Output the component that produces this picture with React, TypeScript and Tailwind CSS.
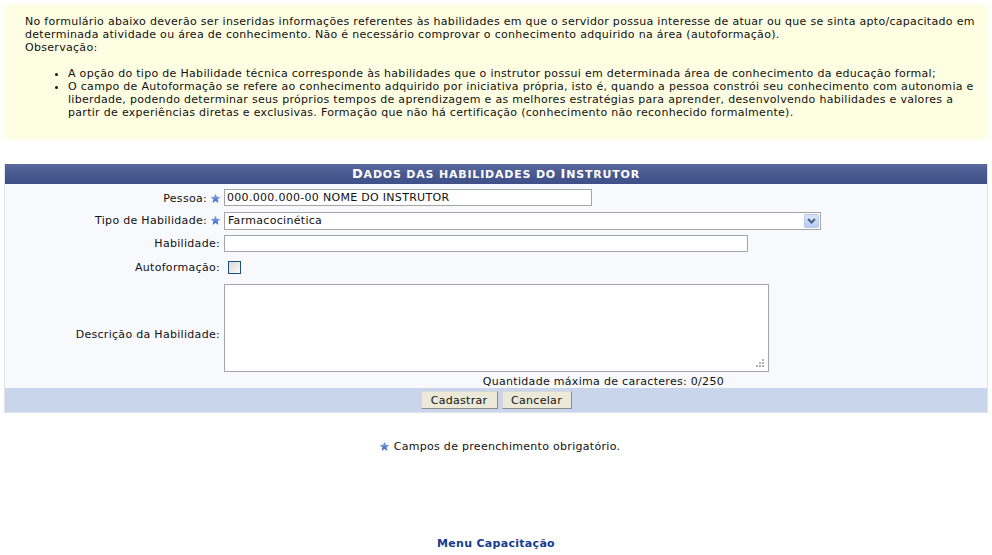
import React from "react";

function Star() {
  return (
    <svg width="9" height="9" viewBox="0 0 10 10" className="inline-block">
      <defs>
        <linearGradient id="sg" x1="0" y1="0" x2="0" y2="1">
          <stop offset="0" stopColor="#8fb3f0" />
          <stop offset="1" stopColor="#2f5fc4" />
        </linearGradient>
      </defs>
      <polygon
        points="5,0.3 6.3,3.5 9.7,3.7 7.1,5.9 7.9,9.4 5,7.5 2.1,9.4 2.9,5.9 0.3,3.7 3.7,3.5"
        fill="url(#sg)"
        stroke="#3a66c0"
        strokeWidth="0.4"
      />
    </svg>
  );
}

export default function App() {
  const font = { fontFamily: '"DejaVu Sans", Verdana, sans-serif' };
  return (
    <div className="min-h-[555px] bg-white text-[11px] leading-[13px] tracking-[0.3px] text-[#111]" style={font}>
      <div className="mx-[4px] pt-[4px]">
        <div className="bg-[#fefee2] pl-[21px] pr-[8px] pt-[11px] pb-[8px]">
          <p>
            No formulário abaixo deverão ser inseridas informações referentes às habilidades em que o servidor possua
            interesse de atuar ou que se sinta apto/capacitado em determinada atividade ou área de conhecimento. Não é
            necessário comprovar o conhecimento adquirido na área (autoformação).
          </p>
          <p>Observação:</p>
          <ul className="my-[13px] list-disc pl-[43px]">
            <li>
              A opção do tipo de Habilidade técnica corresponde às habilidades que o instrutor possui em determinada área
              de conhecimento da educação formal;
            </li>
            <li>
              O campo de Autoformação se refere ao conhecimento adquirido por iniciativa própria, isto é, quando a pessoa
              constrói seu conhecimento com autonomia e liberdade, podendo determinar seus próprios tempos de
              aprendizagem e as melhores estratégias para aprender, desenvolvendo habilidades e valores a partir de
              experiências diretas e exclusivas. Formação que não há certificação (conhecimento não reconhecido
              formalmente).
            </li>
          </ul>
        </div>

        <div className="mt-[24px] border border-t-0 border-[#dfe3ea]">
          <div className="flex h-[20px] items-center justify-center bg-gradient-to-b from-[#5b6a9e] via-[#485990] to-[#3f4f87] text-[11px] font-bold uppercase tracking-[0.8px] text-white">
            <span>
              <span className="text-[13px]">D</span>ados das habilidades do <span className="text-[13px]">I</span>nstrutor
            </span>
          </div>
          <div className="bg-[#f8f9fc] pt-[2px]">
            <div className="grid grid-cols-[215px_1fr] gap-x-[4px]">
              <div className="flex h-[23px] items-center justify-end gap-[4px] pt-[1px]">
                <span>Pessoa:</span>
                <Star />
              </div>
              <div className="flex h-[23px] items-center">
                <div className="flex h-[17px] w-[368px] items-center border border-[#a5a5a5] bg-white px-[2px] text-[11px]">
                  000.000.000-00 NOME DO INSTRUTOR
                </div>
              </div>

              <div className="flex h-[23px] items-center justify-end gap-[4px]">
                <span>Tipo de Habilidade:</span>
                <Star />
              </div>
              <div className="flex h-[23px] items-center">
                <div className="flex h-[18px] w-[597px] items-center justify-between border border-[#a5a5a5] bg-white pl-[3px] pr-[1px]">
                  <span>Farmacocinética</span>
                  <span className="flex h-[14px] w-[15px] items-center justify-center rounded-[2px] bg-gradient-to-b from-[#d9e5fb] to-[#b9cdf3] border border-[#b4c7ee]">
                    <svg width="9" height="6" viewBox="0 0 9 6">
                      <path d="M1 1 L4.5 4.5 L8 1" fill="none" stroke="#4d6185" strokeWidth="2" />
                    </svg>
                  </span>
                </div>
              </div>

              <div className="flex h-[23px] items-center justify-end">
                <span>Habilidade:</span>
              </div>
              <div className="flex h-[23px] items-center">
                <div className="h-[17px] w-[524px] border border-[#a5a5a5] bg-white" />
              </div>

              <div className="flex h-[25px] items-center justify-end">
                <span>Autoformação:</span>
              </div>
              <div className="flex h-[25px] items-center pl-[4px]">
                <div className="h-[13px] w-[13px] border border-[#1c4f7c] bg-gradient-to-br from-[#dcdcd6] to-[#f8f8f6]" />
              </div>

              <div className="flex items-center justify-end">
                <span>Descrição da Habilidade:</span>
              </div>
              <div className="pt-[4px]">
                <div className="relative h-[88px] w-[545px] border border-[#a5a5a5] bg-white">
                  <svg className="absolute bottom-[3px] right-[3px]" width="10" height="10" viewBox="0 0 10 10">
                    <rect x="7" y="1" width="2" height="2" fill="#b0b0b0" />
                    <rect x="4" y="4" width="2" height="2" fill="#b0b0b0" />
                    <rect x="7" y="4" width="2" height="2" fill="#b0b0b0" />
                    <rect x="1" y="7" width="2" height="2" fill="#b0b0b0" />
                    <rect x="4" y="7" width="2" height="2" fill="#b0b0b0" />
                    <rect x="7" y="7" width="2" height="2" fill="#b0b0b0" />
                  </svg>
                </div>
                <div className="mt-[2px] flex h-[14px] w-[500px] items-center justify-end">
                  Quantidade máxima de caracteres: 0/250
                </div>
              </div>
            </div>
          </div>
          <div className="flex h-[24px] items-center justify-center gap-[4px] bg-[#c8d5eb]">
            <button className="h-[18px] w-[77px] border border-[#8c8c8c] border-t-[#d8d8d8] border-l-[#d8d8d8] bg-[#ece9d8] text-[11px] tracking-[0.3px] text-[#111]">
              Cadastrar
            </button>
            <button className="h-[18px] w-[70px] border border-[#8c8c8c] border-t-[#d8d8d8] border-l-[#d8d8d8] bg-[#ece9d8] text-[11px] tracking-[0.3px] text-[#111]">
              Cancelar
            </button>
          </div>
        </div>

        <div className="mt-[27px] flex items-center justify-center gap-[5px] pl-[8px]">
          <Star />
          <span>Campos de preenchimento obrigatório.</span>
        </div>

        <div className="mt-[84px] text-center font-bold tracking-[0.3px] text-[#163c8c]">Menu Capacitação</div>
      </div>
    </div>
  );
}
